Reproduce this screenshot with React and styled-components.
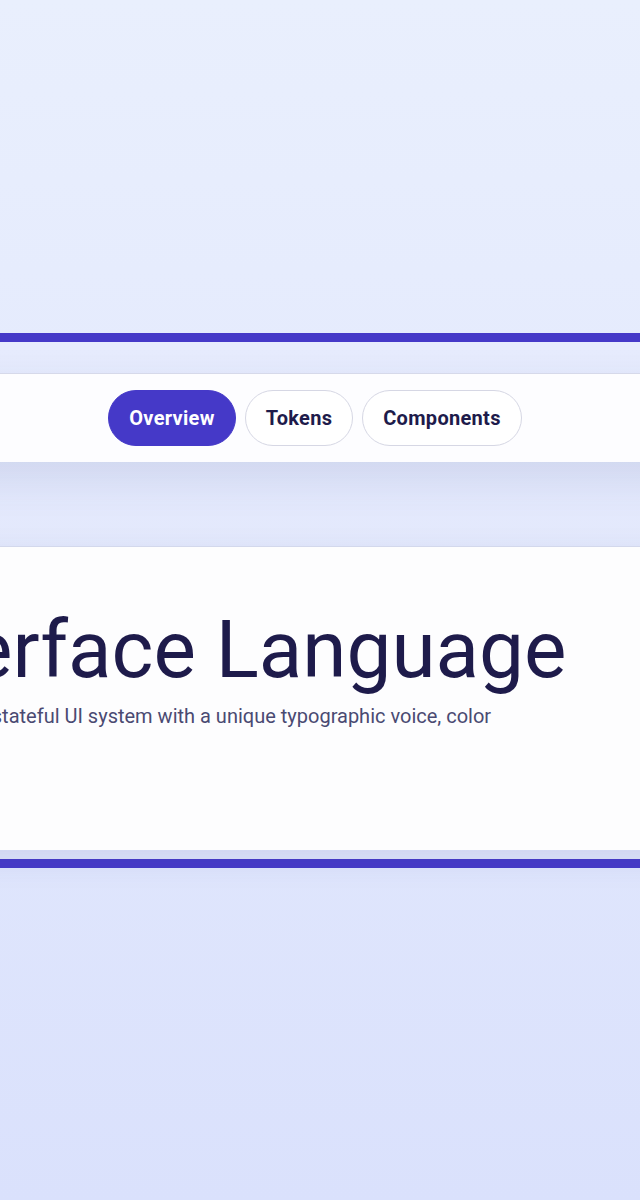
import React from "react";
import styled, { createGlobalStyle } from "styled-components";

const GlobalStyle = createGlobalStyle`
  html, body {
    margin: 0;
    padding: 0;
  }
  body {
    background: linear-gradient(180deg, #e9effd 0%, #e3e9fd 45%, #dae1fc 100%);
    font-family: Roboto, "Noto Sans", sans-serif;
    overflow-x: hidden;
  }
`;

const Page = styled.main`
  min-height: 1200px;
  display: flex;
  flex-direction: column;
  align-items: center;
  justify-content: center;
`;

const Frame = styled.section`
  width: 1040px;
  flex-shrink: 0;
  display: flex;
  flex-direction: column;
  gap: 84px;
  padding: 31px 0 9px;
  border-top: 9px solid #4539c8;
  border-bottom: 9px solid #4539c8;
  background: linear-gradient(180deg, #e6ebfd 0%, #dfe5fb 100%);
`;

const NavCard = styled.nav`
  background: #fdfdff;
  border-top: 1px solid #d6d9ea;
  padding: 16px 10px 16px 0;
  display: flex;
  justify-content: center;
  gap: 9px;
  box-shadow: 0 18px 40px rgba(60, 70, 140, 0.12);
`;

const Pill = styled.button`
  height: 56px;
  padding: 0 20px;
  border-radius: 28px;
  font-family: inherit;
  font-size: 20px;
  font-weight: 700;
  letter-spacing: 0.3px;
  cursor: pointer;
  border: 1px solid ${(p) => (p.$active ? "#4539c8" : "#d6d7e4")};
  background: ${(p) => (p.$active ? "#4539c8" : "#ffffff")};
  color: ${(p) => (p.$active ? "#ffffff" : "#1e1b4b")};
`;

const Hero = styled.article`
  background: #fdfdfe;
  border-top: 1px solid #d3d8ec;
  height: 304px;
  box-sizing: border-box;
  padding: 55px 0 0 78px;
  box-shadow: 0 10px 30px rgba(60, 70, 140, 0.1);
`;

const Title = styled.h1`
  margin: 0;
  font-size: 80px;
  font-weight: 400;
  line-height: 1.2;
  color: #1e1b4b;
  white-space: nowrap;
`;

const Lead = styled.p`
  margin: 3px 0 0;
  max-width: 640px;
  font-size: 20px;
  line-height: 1.5;
  color: #4a4a72;
`;

const tabs = ["Overview", "Tokens", "Components"];

export default function App() {
  return (
    <>
      <GlobalStyle />
      <Page>
        <Frame>
          <NavCard>
            {tabs.map((t, i) => (
              <Pill key={t} $active={i === 0}>
                {t}
              </Pill>
            ))}
          </NavCard>
          <Hero>
            <Title>Interface Language</Title>
            <Lead>
              An adaptive, stateful UI system with a unique typographic voice,
              color and rhythm.
            </Lead>
          </Hero>
        </Frame>
      </Page>
    </>
  );
}
